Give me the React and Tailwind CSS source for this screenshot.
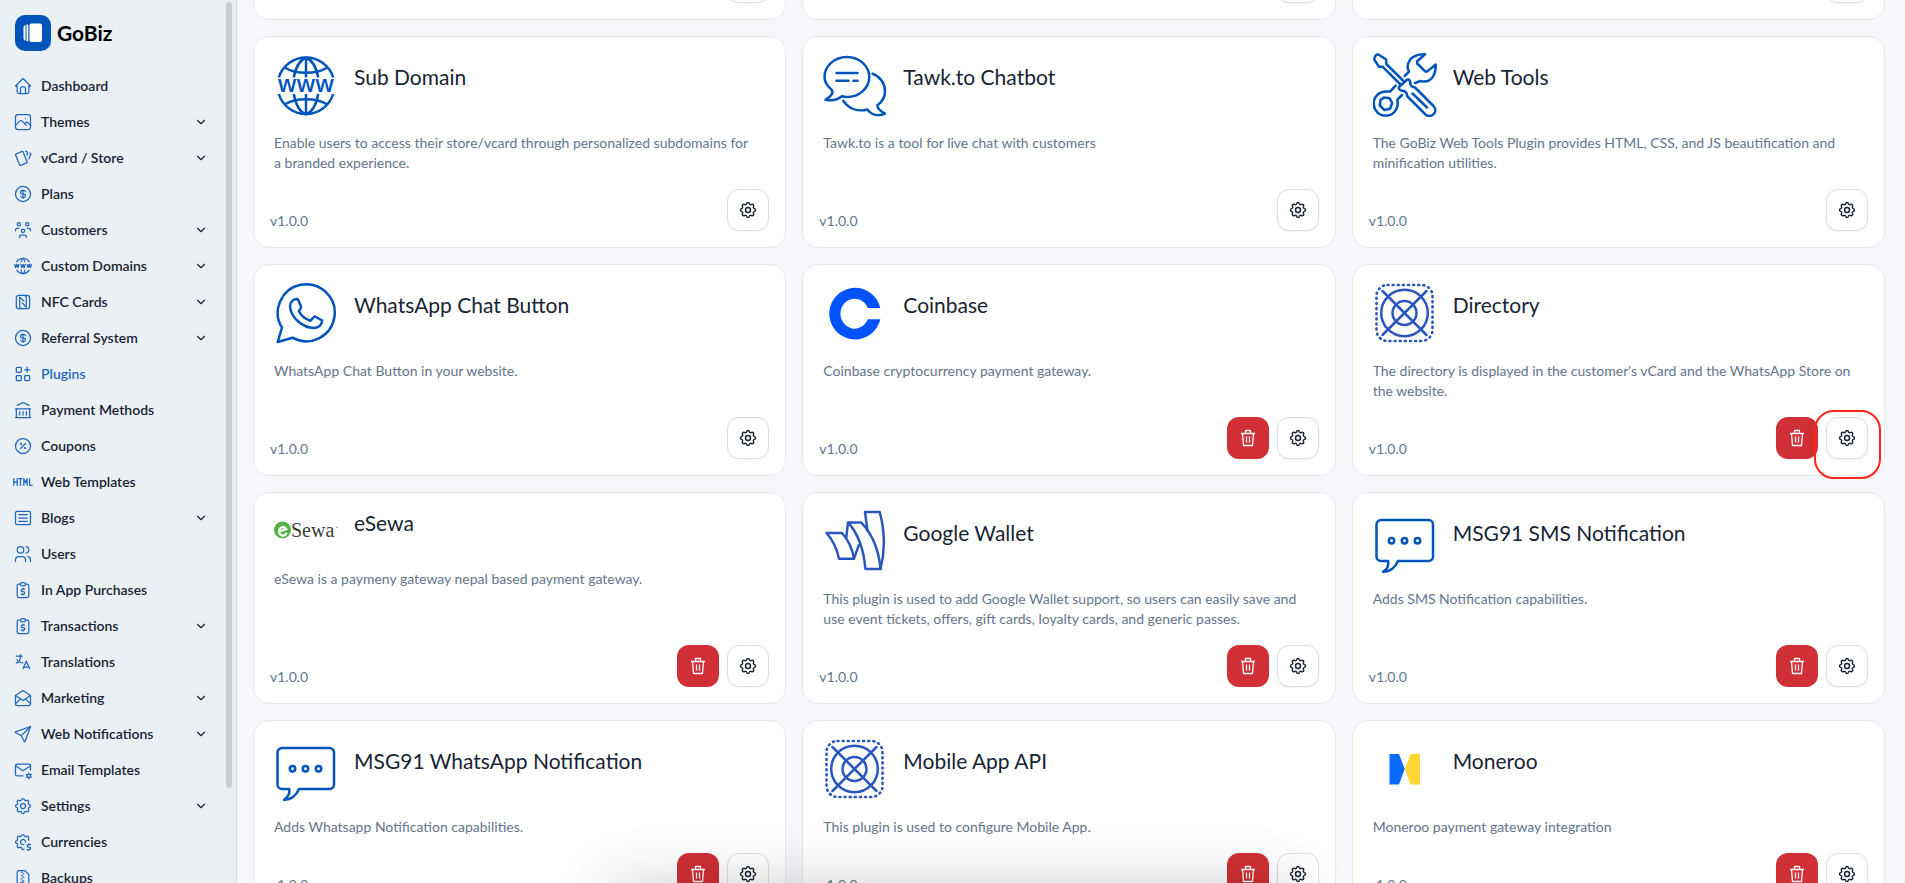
import React from 'react';
import {
  TbHome, TbPhoto, TbCards, TbCoin, TbUsersGroup, TbWorldWww, TbNfc, TbHtml,
  TbArticle, TbUsers, TbReportMoney, TbLanguage, TbMailOpened, TbSend, TbMailCog, TbSettings,
  TbSettingsDollar, TbFileZip, TbChevronDown,
} from 'react-icons/tb';

// Icons the package does not have
function BankIcon() {
  return (
    <svg className="w-5 h-5" viewBox="0 0 24 24" fill="none" stroke="currentColor" strokeWidth="1.5" strokeLinecap="round" strokeLinejoin="round">
      <path d="M5 6.5l7-3.5l7 3.5M3 10.5h18M4 10.5v10.5M20 10.5v10.5M3 21h18M8 14v4M12 14v4M16 14v4" />
    </svg>
  );
}

function AppsAddIcon() {
  return (
    <svg className="w-5 h-5" viewBox="0 0 24 24" fill="none" stroke="currentColor" strokeWidth="1.5" strokeLinecap="round" strokeLinejoin="round">
      <rect x="4" y="4" width="6" height="6" rx="1" />
      <rect x="4" y="14" width="6" height="6" rx="1" />
      <rect x="14" y="14" width="6" height="6" rx="1" />
      <path d="M14 7h6M17 4v6" />
    </svg>
  );
}

function PercentIcon() {
  return (
    <svg className="w-5 h-5" viewBox="0 0 24 24" fill="none" stroke="currentColor" strokeWidth="1.5" strokeLinecap="round" strokeLinejoin="round">
      <circle cx="12" cy="12" r="9" />
      <path d="M9 15l6-6" />
      <circle cx="9.5" cy="9.5" r=".6" fill="currentColor" />
      <circle cx="14.5" cy="14.5" r=".6" fill="currentColor" />
    </svg>
  );
}

function TrashIcon() {
  return (
    <svg className="w-5 h-5" viewBox="0 0 20 20" fill="none" stroke="currentColor" strokeWidth="1.3" strokeLinejoin="round">
      <path d="M3 5.5h14M7.5 5.5v-3h5v3M4.5 5.5l1 12h9l1-12M8.5 8.5v6M11.5 8.5v6" />
    </svg>
  );
}

// 64px plugin artwork
function PluginSvg({ children, className }) {
  return (
    <svg className={`w-16 h-16 shrink-0 ${className}`} viewBox="0 0 64 64" fill="none" stroke="currentColor" strokeWidth="2.5" strokeLinecap="round" strokeLinejoin="round" aria-hidden="true">
      {children}
    </svg>
  );
}

function SubDomainArt() {
  return (
    <PluginSvg className="text-[#0054ba]">
      <g strokeLinecap="butt">
        <path d="M4.800 24.500A28.500 28.500 0 0 1 59.200 24.500M4.800 41A28.500 28.500 0 0 0 59.200 41" />
        <path d="M32 4.500v20M32 41v20.500M32 4.500C26 7 21.500 15 19.800 24.500M32 4.500C38 7 42.500 15 44.200 24.500M32 61.500C26 59 21.500 51 19.800 41M32 61.500C38 59 42.500 51 44.200 41" />
        <path d="M11 14.800C22 21.500 42 21.500 53 14.800M11 51.200C22 44.500 42 44.500 53 51.200" />
      </g>
      <text x="32" y="38.500" textAnchor="middle" fontSize="23" fontWeight="600" fontFamily="'Open Sans', sans-serif" fill="currentColor" stroke="none">www</text>
    </PluginSvg>
  );
}

function ChatArt() {
  return (
    <PluginSvg className="text-[#0054ba]">
      <path d="M8.500 36.500C4 33 1.500 29 1.500 24A22.400 20 0 0 1 46.300 24A22.400 20 0 0 1 24 44C22 44 20.500 43.800 19 43.300C15 46.500 9 48 2.500 46.700C7 44 11.500 40.500 8.500 36.500Z" />
      <path d="M49.500 20.700C57 23.500 62 30.500 62 38C62 44 59 49 54.300 52.300C54.300 55.500 58 58.500 62 60.700C56 63.300 49 62.500 44.300 56.500C35 59 26 56 20.200 47.700" />
      <path d="M13.500 20H34.500M13.500 27.700H25.500M30.500 27.700H34.500" />
    </PluginSvg>
  );
}

function ToolsArt() {
  return (
    <PluginSvg className="text-[#0054ba]">
      <path d="M27 31L9.500 13.700L5.800 13.700L1.300 6.500C1.500 4 3 1.800 5 1.300L13.200 6.500V11L30.500 28" />
      <path d="M26 34L34 26.800C36.500 26 37.500 28 37.300 30.500C37.300 33.500 39.500 34 42 34.500L60.500 53C66 59 58 66 52.500 61.500L34.500 43.500C34 39.500 32 38 29.500 37.800C26.500 37.500 25.500 36 26 34Z" />
      <path d="M39.500 40.500L54 54.500" />
      <path d="M31.700 23L36 18.700C32.500 12 36 1 52 1.300L44.200 8.200V10.500L52.500 18.600H54L62.700 11.500C63 22 58 31 47.500 28L42 30" />
      <path d="M22.600 32.700L17 38.600H13A12 12 0 1 0 24.700 50.500C25 48 24 47.500 24.500 46.500L29 42" />
      <path d="M11 44.500L16.500 45.200L19.200 50L17 55.800L11.500 57L6.800 52.500L7.500 47Z" />
    </PluginSvg>
  );
}

function WhatsAppArt() {
  return (
    <PluginSvg className="text-[#0054ba]">
      <path d="M8 46.700A28.500 28.500 0 1 1 18.500 56.700L3.700 61Z" />
      <path d="M22.500 18C19 18 16 21.500 16 25.500C17 37 29 47 40 47C44.500 47 48 44 48.200 39.500L41 35.500C39.500 35 38 39 36.300 39.800C31 38 27 34.500 24.800 30C26 29 27.500 26.500 27 25.500L24 18.500Z" />
    </PluginSvg>
  );
}

function CoinbaseArt() {
  return (
    <PluginSvg className="text-[#0052ff]">
      <path fill="currentColor" stroke="none" d="M57.300 27.100A25.800 25.800 0 1 0 57.300 38.200H44.800A14.200 15 0 1 1 44.800 27.100Z" />
    </PluginSvg>
  );
}

function TargetArt() {
  return (
    <PluginSvg className="text-[#2a57bd]">
      <rect x="3.500" y="4" width="56" height="56" rx="11" strokeWidth="2.600" strokeDasharray="1 4.130" />
      <circle cx="31.500" cy="32" r="23.300" />
      <circle cx="31.500" cy="32" r="12" />
      <path d="M9.500 10L53.500 54M53.500 10L9.500 54" />
    </PluginSvg>
  );
}

function ESewaArt() {
  return (
    <svg className="w-16 h-11 shrink-0" viewBox="0 0 64 44" aria-hidden="true">
      <circle cx="8.500" cy="21" r="8.500" fill="#56b146" />
      <path d="M5 22.500L12.300 20.200A3.900 4.300 0 1 0 12.300 24.500" fill="none" stroke="#fff" strokeWidth="2.200" strokeLinecap="round" />
      <text x="17" y="28" fontSize="20" fontFamily="'Liberation Serif', serif" fill="#3b3b3b">Sewa</text>
      <circle cx="63" cy="18.500" r=".7" fill="#777" />
    </svg>
  );
}

function WalletArt() {
  return (
    <PluginSvg className="text-[#2a57bd]">
      <path d="M3.500 24H19C26 31.700 29.500 40.700 31 49.700H16C14 39.700 9.500 30.700 3.500 24Z" />
      <path d="M25 13.400H38C50 25.700 56 42.700 57.500 60H42.400C41 42.700 36 25.700 25 13.400ZM25 13.400L23.200 29.200M31 49.700L35.800 36.200" />
      <path d="M44.500 21.700L42 3H56.700C62 22.700 62 42.700 57.500 60" />
    </PluginSvg>
  );
}

function MessageArt() {
  return (
    <PluginSvg className="text-[#0054ba]">
      <path d="M8 11H55.500A4.500 4.500 0 0 1 60 15.500V47.500A4.500 4.500 0 0 1 55.500 52H25C22.500 58.200 17 62.700 10 62.700C14 60.200 16 56.700 15.200 52H8A4.500 4.500 0 0 1 3.500 47.500V15.500A4.500 4.500 0 0 1 8 11Z" />
      <circle cx="18.500" cy="31.700" r="2.700" />
      <circle cx="31.500" cy="31.700" r="2.700" />
      <circle cx="44.500" cy="31.700" r="2.700" />
    </PluginSvg>
  );
}

function MonerooArt() {
  return (
    <PluginSvg className="text-[#0a6cff]">
      <path stroke="none" fill="currentColor" d="M16.500 17H26L31.700 32L26 47.500H16.500Z" />
      <path stroke="none" fill="#ffd633" d="M47 17H37.500L32 32L37.500 47.500H47Z" />
    </PluginSvg>
  );
}

const menu = [
  { label: 'Dashboard', icon: TbHome },
  { label: 'Themes', icon: TbPhoto, open: true },
  { label: 'vCard / Store', icon: TbCards, open: true },
  { label: 'Plans', icon: TbCoin },
  { label: 'Customers', icon: TbUsersGroup, open: true },
  { label: 'Custom Domains', icon: TbWorldWww, open: true },
  { label: 'NFC Cards', icon: TbNfc, open: true },
  { label: 'Referral System', icon: TbCoin, open: true },
  { label: 'Plugins', icon: AppsAddIcon, active: true },
  { label: 'Payment Methods', icon: BankIcon },
  { label: 'Coupons', icon: PercentIcon },
  { label: 'Web Templates', icon: TbHtml },
  { label: 'Blogs', icon: TbArticle, open: true },
  { label: 'Users', icon: TbUsers },
  { label: 'In App Purchases', icon: TbReportMoney },
  { label: 'Transactions', icon: TbReportMoney, open: true },
  { label: 'Translations', icon: TbLanguage },
  { label: 'Marketing', icon: TbMailOpened, open: true },
  { label: 'Web Notifications', icon: TbSend, open: true },
  { label: 'Email Templates', icon: TbMailCog },
  { label: 'Settings', icon: TbSettings, open: true },
  { label: 'Currencies', icon: TbSettingsDollar },
  { label: 'Backups', icon: TbFileZip },
];

const plugins = [
  { name: 'Sub Domain', art: SubDomainArt, text: 'Enable users to access their store/vcard through personalized subdomains for a branded experience.' },
  { name: 'Tawk.to Chatbot', art: ChatArt, text: 'Tawk.to is a tool for live chat with customers' },
  { name: 'Web Tools', art: ToolsArt, text: 'The GoBiz Web Tools Plugin provides HTML, CSS, and JS beautification and minification utilities.' },
  { name: 'WhatsApp Chat Button', art: WhatsAppArt, text: 'WhatsApp Chat Button in your website.' },
  { name: 'Coinbase', art: CoinbaseArt, text: 'Coinbase cryptocurrency payment gateway.', removable: true },
  { name: 'Directory', art: TargetArt, text: "The directory is displayed in the customer's vCard and the WhatsApp Store on the website.", removable: true, marked: true },
  { name: 'eSewa', art: ESewaArt, text: 'eSewa is a paymeny gateway nepal based payment gateway.', removable: true },
  { name: 'Google Wallet', art: WalletArt, text: 'This plugin is used to add Google Wallet support, so users can easily save and use event tickets, offers, gift cards, loyalty cards, and generic passes.', removable: true },
  { name: 'MSG91 SMS Notification', art: MessageArt, text: 'Adds SMS Notification capabilities.', removable: true },
  { name: 'MSG91 WhatsApp Notification', art: MessageArt, text: 'Adds Whatsapp Notification capabilities.', removable: true },
  { name: 'Mobile App API', art: TargetArt, text: 'This plugin is used to configure Mobile App.', removable: true },
  { name: 'Moneroo', art: MonerooArt, text: 'Moneroo payment gateway integration', removable: true },
];

function MenuItem({ item }) {
  const Icon = item.icon;
  const content = (
    <>
      <span className="w-5 h-5 text-[#1f66c1] shrink-0">
        <Icon size={20} strokeWidth={1.5} />
      </span>
      <span className="flex-1 text-left">{item.label}</span>
    </>
  );

  if (item.open) {
    return (
      <button type="button" aria-expanded="false" className="flex items-center gap-2 h-9 w-full text-[#182433]">
        {content}
        <TbChevronDown size={14} strokeWidth={2} />
      </button>
    );
  }

  return (
    <a href="#" className={`flex items-center gap-2 h-9 ${item.active ? 'text-[#1f66c1]' : 'text-[#182433]'}`}>
      {content}
    </a>
  );
}

function SettingsButton({ marked }) {
  return (
    <button type="button" aria-label="Settings" className="relative flex items-center justify-center w-[42px] h-[42px] rounded-xl border border-[#dadfe6] bg-white text-[#182433] shadow-xs">
      <TbSettings size={20} strokeWidth={1.75} />
      {marked && <span className="absolute -left-[13px] -right-[14px] -top-2 -bottom-[21px] rounded-[20px] border-2 border-[#ff2418]" />}
    </button>
  );
}

function PluginCard({ plugin }) {
  const Art = plugin.art;

  return (
    <article className="flex flex-col gap-4 bg-white border border-[#e5e8ed] rounded-2xl p-4">
      {/* Logo and name */}
      <div className="flex items-center gap-4 px-1">
        <Art />
        <h3 className="text-[21px] leading-7 pb-4 text-[#182433]">{plugin.name}</h3>
      </div>

      <p className="pl-1 pr-3 text-sm leading-5 text-[#66758c]">{plugin.text}</p>

      {/* Version and actions */}
      <div className="flex items-end justify-between mt-auto">
        <span className="text-sm leading-5 text-[#66758c]">v1.0.0</span>
        <div className="flex gap-2">
          {plugin.removable && (
            <button type="button" aria-label="Delete" className="flex items-center justify-center w-[42px] h-[42px] rounded-xl bg-[#d03035] text-white">
              <TrashIcon />
            </button>
          )}
          <SettingsButton marked={plugin.marked} />
        </div>
      </div>
    </article>
  );
}

export default function App() {
  return (
    <div className="relative flex h-screen overflow-hidden bg-[#f5f7fb] font-['Lato',sans-serif]">

      {/* Sidebar */}
      <aside className="flex w-[237px] shrink-0 bg-[#ebf0f4] border-r border-[#d3d9e0]">
        <div className="flex-1 pl-[13px] pr-[18px] pt-[15px]">
          <a href="#" className="flex items-center gap-1.5 pl-0.5 mb-[17px]">
            <svg className="w-9 h-9" viewBox="0 0 36 36" aria-hidden="true">
              <rect width="36" height="36" rx="10" fill="#0054ba" />
              <rect x="14.500" y="8.500" width="12.500" height="18.500" rx="2" fill="#fff" />
              <path d="M11.500 9.500h1.800v16.700h-1.800zM8.500 12q.3-1.500 2-2v15.800q-1.700-.5-2-2z" fill="#fff" />
            </svg>
            <span className="text-[21px] leading-6 font-bold text-black">GoBiz</span>
          </a>
          <nav className="text-sm font-semibold">
            {menu.map((item) => (
              <MenuItem key={item.label} item={item} />
            ))}
          </nav>
        </div>
        <div className="w-1.5 h-[89%] mt-0.5 mr-1 rounded-full bg-[#c9ced3]" />
      </aside>

      {/* Plugin grid, scrolled part way down */}
      <main className="flex-1 pl-4 pr-5">
        <div className="grid grid-cols-3 gap-4 -mt-[192px]">
          {[0, 1, 2].map((i) => (
            <div key={i} className="flex items-end justify-end h-[212px] bg-white border border-[#e5e8ed] rounded-2xl p-4">
              <SettingsButton />
            </div>
          ))}
          {plugins.map((plugin) => (
            <PluginCard key={plugin.name} plugin={plugin} />
          ))}
        </div>
      </main>

      {/* Shadow cast from below the fold */}
      <div className="absolute top-full left-[32%] right-[32%] h-20 shadow-[0_0_60px_rgba(0,0,0,0.18)] pointer-events-none" />
    </div>
  );
}
